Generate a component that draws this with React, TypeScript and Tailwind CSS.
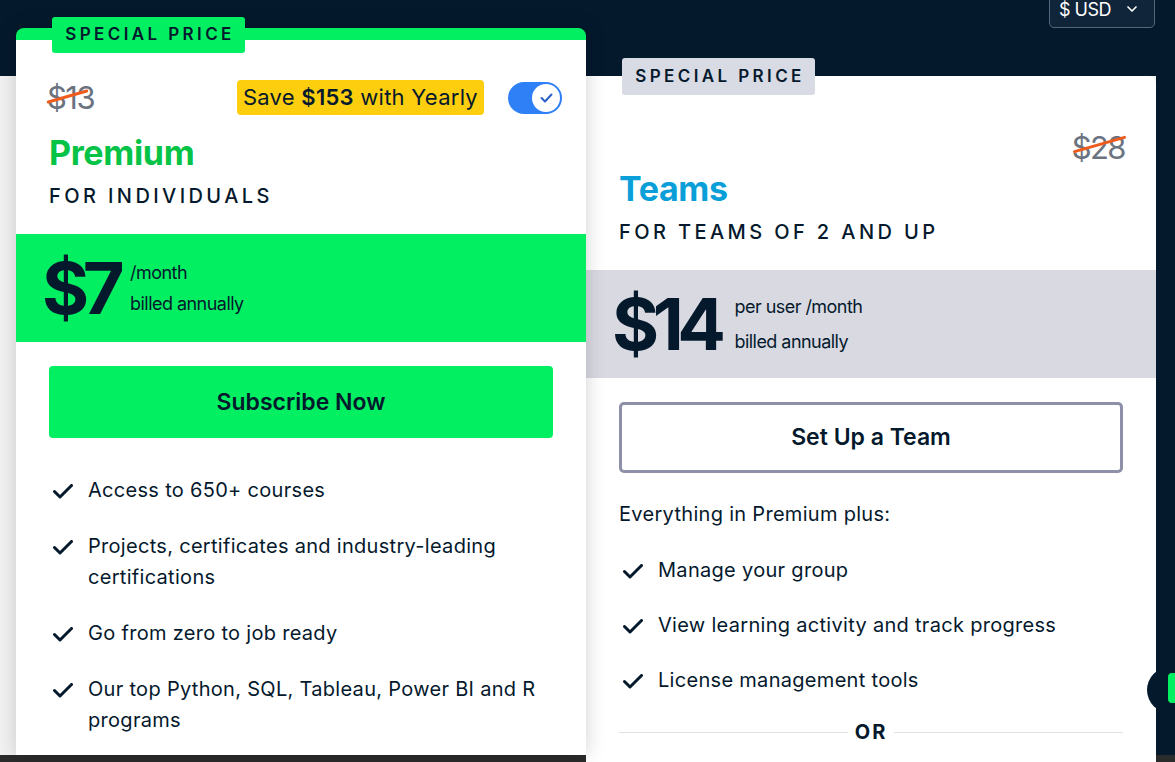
import { ChevronDown } from "lucide-react"

const premiumFeatures = [
  "Access to 650+ courses",
  "Projects, certificates and industry-leading certifications",
  "Go from zero to job ready",
  "Our top Python, SQL, Tableau, Power BI and R programs",
]

const teamFeatures = [
  "Manage your group",
  "View learning activity and track progress",
  "License management tools",
]

function CheckMark() {
  return (
    <svg width="20" height="15" viewBox="0 0 20 15" fill="none" className="ml-[4px] mt-[9px]">
      <path d="M1.5 7.5 7 13 18.5 1.5" stroke="#05192d" strokeWidth="3" strokeLinecap="round" strokeLinejoin="round" />
    </svg>
  )
}

function FeatureList({ items, gap }: { items: string[]; gap: string }) {
  return (
    <ul className={`flex flex-col px-[33px] ${gap}`}>
      {items.map((item) => (
        <li key={item} className="flex">
          <span className="w-[39px] shrink-0">
            <CheckMark />
          </span>
          <span className="text-[20px] leading-[31px] tracking-[0.015em] text-[#05192d]">{item}</span>
        </li>
      ))}
    </ul>
  )
}

function Toggle() {
  return (
    <div className="flex h-[32px] w-[54px] shrink-0 items-center justify-end rounded-full bg-[#2f7ff7] pr-[2px]">
      <div className="flex h-[28px] w-[28px] items-center justify-center rounded-full bg-white">
        <svg width="13" height="10" viewBox="0 0 13 10" fill="none">
          <path d="M1.5 5 5 8.5 11.5 1.5" stroke="#2b5fc7" strokeWidth="2" strokeLinecap="round" strokeLinejoin="round" />
        </svg>
      </div>
    </div>
  )
}

function Tag({ className }: { className: string }) {
  return (
    <div
      className={`absolute left-[36px] flex w-[193px] items-center justify-center rounded-[3px] text-[17px] font-semibold tracking-[0.2em] text-[#05192d] ${className}`}
    >
      <span className="ml-[3px]">SPECIAL PRICE</span>
    </div>
  )
}

function PremiumCard() {
  return (
    <section className="relative z-10 h-full w-[570px] shrink-0 rounded-t-lg border-t-[12px] border-[#03ef62] bg-white shadow-[0_0_20px_rgba(0,0,0,0.18)]">
      <Tag className="top-[-23px] h-[36px] bg-[#03ef62]" />
      <div className="px-[33px]">
        <div className="mr-[-9px] mt-[40px] flex h-[35px] items-center justify-between">
          <span className="relative ml-[-2px] text-[31px] leading-none tracking-[-0.05em] text-[#6b7380]">
            $13
            <span className="absolute left-[-1px] top-[12.5px] h-[3px] w-[43px] -rotate-[16deg] rounded-full bg-[#ee5b1c]" />
          </span>
          <div className="flex items-center gap-6">
            <span className="flex h-[35px] items-center rounded-[4px] bg-[#fcce0d] px-[6px] text-[22px] tracking-[0.012em] text-[#05192d]">
              Save&nbsp;<b className="font-semibold">$153</b>&nbsp;with Yearly
            </span>
            <Toggle />
          </div>
        </div>
        <h2 className="mt-[18px] text-[34px] font-bold leading-[40px] tracking-[-0.01em] text-[#05c346]">Premium</h2>
        <p className="mt-[11px] text-[20px] font-medium leading-[24px] tracking-[0.17em] text-[#05192d]">FOR INDIVIDUALS</p>
      </div>
      <div className="mt-[26px] flex h-[108px] items-center bg-[#03ef62] pl-[26px] text-[#05192d]">
        <span className="text-[72px] font-bold leading-none tracking-[-0.09em]">$7</span>
        <div className="ml-[12px] text-[18px] leading-[31px] tracking-[-0.03em]">
          <div>/month</div>
          <div>billed annually</div>
        </div>
      </div>
      <div className="px-[33px] pt-[24px]">
        <button className="flex h-[72px] w-full items-center justify-center rounded-[4px] bg-[#03ef62] text-[23px] font-semibold text-[#05192d]">
          Subscribe Now
        </button>
      </div>
      <div className="mt-[37px]">
        <FeatureList items={premiumFeatures} gap="gap-[25px]" />
      </div>
    </section>
  )
}

function TeamsCard() {
  return (
    <section className="relative mt-[48px] h-full w-[570px] shrink-0 rounded-tr-lg bg-white">
      <Tag className="top-[-18px] h-[37px] bg-[#d9dbe4]" />
      <div className="px-[33px]">
        <div className="mr-[-2px] mt-[54px] flex h-[35px] items-center justify-end">
          <span className="relative text-[31px] leading-none tracking-[-0.05em] text-[#6b7380]">
            $28
            <span className="absolute left-0 top-[11px] h-[3px] w-[55px] -rotate-[16deg] rounded-full bg-[#ee5b1c]" />
          </span>
        </div>
        <h2 className="mt-[4px] text-[34px] font-bold leading-[40px] tracking-[-0.01em] text-[#0a9fd8]">Teams</h2>
        <p className="mt-[11px] text-[20px] font-medium leading-[24px] tracking-[0.17em] text-[#05192d]">
          FOR TEAMS OF 2 AND UP
        </p>
      </div>
      <div className="mt-[26px] flex h-[108px] items-center bg-[#d9d9e2] pl-[26px] text-[#05192d]">
        <span className="text-[72px] font-bold leading-none tracking-[-0.09em]">$14</span>
        <div className="ml-[15px] text-[18px] leading-[35px] tracking-[-0.03em]">
          <div>per user /month</div>
          <div>billed annually</div>
        </div>
      </div>
      <div className="px-[33px] pt-[24px]">
        <button className="flex h-[71px] w-full items-center justify-center rounded-[5px] border-[3px] border-[#8e8fa8] bg-white text-[23px] font-semibold text-[#05192d]">
          Set Up a Team
        </button>
      </div>
      <p className="mt-[26px] px-[33px] text-[20px] leading-[31px] tracking-[0.015em] text-[#05192d]">
        Everything in Premium plus:
      </p>
      <div className="mt-[25px]">
        <FeatureList items={teamFeatures} gap="gap-[24px]" />
      </div>
      <div className="mt-[24px] flex items-center gap-[7px] px-[33px]">
        <div className="h-px flex-1 bg-[#e1e1e1]" />
        <span className="text-[20px] font-bold leading-[24px] tracking-[0.1em] text-[#05192d]">OR</span>
        <div className="h-px flex-1 bg-[#e1e1e1]" />
      </div>
    </section>
  )
}

export default function App() {
  return (
    <div className="relative flex h-[762px] w-full flex-col overflow-hidden bg-[#05192d] font-[Inter,sans-serif]">
      <div className="flex min-h-0 flex-1">
        <main className="flex w-[1156px] shrink-0 flex-col bg-[linear-gradient(to_bottom,#05192d_76px,#f2f2f2_76px)] pl-4">
          <div className="flex h-[28px] shrink-0 items-end justify-end pr-[1px]">
            <button className="flex h-[38px] w-[106px] shrink-0 items-center rounded-[5px] border border-[#56657a] bg-[#10253a] pl-[9px] text-[18px] tracking-[-0.03em] text-white">
              $ USD
              <ChevronDown size={16} strokeWidth={2.5} className="ml-[13px]" />
            </button>
          </div>
          <div className="flex min-h-0 flex-1 items-start">
            <PremiumCard />
            <TeamsCard />
          </div>
        </main>
        <div className="flex-1 bg-[#05192d]" />
      </div>
      <div className="h-[7px] shrink-0 bg-[#2b2b2b]" />
      <div className="absolute left-[1147px] top-[667px] h-[46px] w-[46px] rounded-full bg-[#05192d]">
        <div className="ml-[21px] mt-[6px] h-[30px] w-[20px] rounded-[4px] bg-[#03ef62]" />
      </div>
    </div>
  )
}
